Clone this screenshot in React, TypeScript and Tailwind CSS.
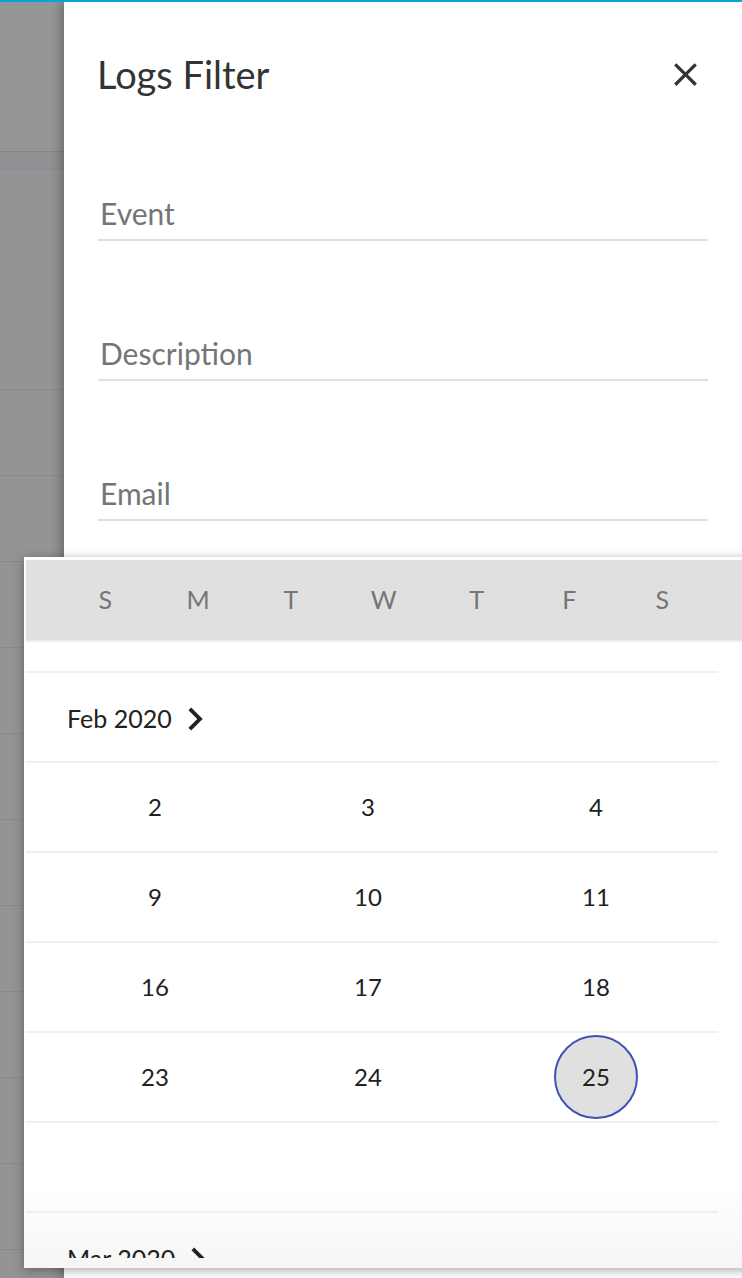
import React from 'react';

const weekdays = ['S', 'M', 'T', 'W', 'T', 'F', 'S'];

const febWeeks: (number | null)[][] = [
  [2, 3, 4],
  [9, 10, 11],
  [16, 17, 18],
  [23, 24, 25],
  [null, null, null],
];

// rows of the table that sits behind the drawer's backdrop
const backdropRows = [220, 86, 86, 86, 86, 86, 86, 86, 86, 86, 86, 86, 86];

const CloseIcon = () => (
  <svg width="39" height="39" viewBox="0 0 24 24" fill="#333333">
    <path d="M19 6.41L17.59 5 12 10.59 6.41 5 5 6.41 10.59 12 5 17.59 6.41 19 12 13.41 17.59 19 19 17.59 13.41 12z" />
  </svg>
);

const ChevronRight = () => (
  <svg width="46" height="46" viewBox="0 0 24 24" fill="#212121">
    <path d="M10 6L8.59 7.41 13.17 12l-4.58 4.59L10 18l6-6z" />
  </svg>
);

const FilterField = ({ label, first }: { label: string; first?: boolean }) => (
  <div className={`${first ? 'mt-[100px]' : 'mt-[95px]'} mr-[34px] ml-[1px] border-b-2 border-[#e0e0e0] pb-[8px]`}>
    <input
      placeholder={label}
      className="block h-[35px] w-full bg-transparent pl-[2px] text-[30px] leading-[35px] text-[#212121] outline-none placeholder:text-[#757575]"
    />
  </div>
);

const MonthHeader = ({ label }: { label: string }) => (
  <div className="flex h-[90px] items-center border-b-2 border-[#f0f0f0] pl-[41px] pt-[4px]">
    <span className="text-[25px] text-[#212121]">{label}</span>
    <ChevronRight />
  </div>
);

const CalendarPopup = () => (
  <div className="absolute left-[24px] top-[557px] h-[711px] w-[740px] bg-gradient-to-b from-white from-88% to-[#f6f6f6] pl-[2px] pt-[3px] shadow-[0_2px_10px_rgba(0,0,0,0.35)]">
    <div className="flex h-[82px] items-center border-b-2 border-[#eeeeee] bg-[#e0e0e0] pl-[33px]">
      {weekdays.map((d, i) => (
        <div key={i} className="w-[92.8px] text-center text-[25px] text-[#757575]">
          {d}
        </div>
      ))}
    </div>
    <div className="h-[616px] w-[692px] overflow-hidden">
      <div className="h-[31px] border-b-2 border-[#f0f0f0]" />
      <MonthHeader label="Feb 2020" />
      {febWeeks.map((week, i) => (
        <div key={i} className="flex h-[90px] items-center border-b-2 border-[#f0f0f0]">
          {week.map((day, j) => (
            <div
              key={j}
              className={`${['ml-[87px]', 'ml-[129px]', 'ml-[144px]'][j]} flex h-[84px] w-[84px] items-center justify-center rounded-full text-[24px] text-[#212121] ${
                day === 25 ? 'border-2 border-[#3f51b5] bg-[#e0e0e0]' : ''
              }`}
            >
              {day}
            </div>
          ))}
        </div>
      ))}
      <MonthHeader label="Mar 2020" />
    </div>
  </div>
);

export default function App() {
  return (
    <div
      className="relative h-[1278px] w-[742px] overflow-hidden bg-[#939393]"
      style={{ fontFamily: 'Lato, "Noto Sans", sans-serif' }}
    >
      <div className="relative z-10 h-[2px] bg-[#03a9d4]" />
      <div className="flex h-[1276px]">
        <div className="flex w-[64px] shrink-0 flex-col overflow-hidden">
          <div className="h-[150px] shrink-0 border-b border-[#868686] bg-[#959695]" />
          <div className="h-[18px] shrink-0 border-b border-[#8a8a8a] bg-[#8f9194]" />
          {backdropRows.map((h, i) => (
            <div key={i} style={{ height: h }} className="shrink-0 border-b border-[#8a8a8a] bg-[#949494]" />
          ))}
        </div>
        <aside className="flex-1 bg-white pl-[33px] shadow-[-3px_0_10px_rgba(0,0,0,0.3)]">
          <div className="mt-[50px] flex items-center justify-between pr-[37px]">
            <h1 className="text-[38px] leading-[44px] text-[#333333]">Logs Filter</h1>
            <CloseIcon />
          </div>
          <FilterField label="Event" first />
          <FilterField label="Description" />
          <FilterField label="Email" />
        </aside>
      </div>
      <CalendarPopup />
    </div>
  );
}
